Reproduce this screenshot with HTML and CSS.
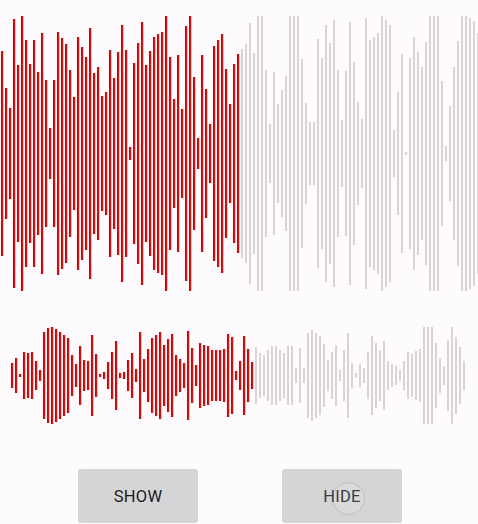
FILE: index.html
```html
<!DOCTYPE html>
<html lang="en">
<head>
<meta charset="utf-8">
<title>Waveform</title>
<link rel="stylesheet" href="styles.css">
</head>
<body>
<main class="screen">
<div class="wave wave-large" id="large"></div>
<div class="wave wave-small" id="small"></div>
<div class="actions">
<button class="button" type="button">SHOW</button>
<button class="button pressed" type="button"><span class="touch"></span><span class="label">HIDE</span></button>
</div>
</main>
<script src="wave.js"></script>
</body>
</html>
```
FILE: styles.css
```css
* { box-sizing: border-box; }
body { margin: 0; background: #fdfbfe; }
.screen { width: 478px; height: 524px; overflow: hidden; padding-top: 16px; font-family: Roboto, sans-serif; }
.wave { display: flex; align-items: center; gap: 2px; overflow: hidden; }
.wave-large { height: 275px; padding-left: 1px; }
.wave-small { height: 97px; margin-top: 36px; padding-left: 11px; }
.bar { flex: 0 0 2px; background: #dad3d6; }
.bar.played { background: linear-gradient(to right, #702c2c 1px, #fb0000 1px); box-shadow: 1px 0 0 #ffb4b4; }
.actions { display: flex; gap: 84px; margin-top: 45px; padding-left: 78px; }
.button { position: relative; width: 120px; height: 54px; padding: 1px 0 0; border: 0; border-radius: 3px; background: #d5d5d7; color: #1b1c1e; font: 400 16.5px/53px Roboto, sans-serif; letter-spacing: 0.25px; }
.pressed { color: #3b3e40; }
.label { position: relative; }
.touch { position: absolute; left: 50px; top: 13px; width: 33px; height: 33px; border: 1px solid #bfbdbf; border-radius: 50%; background: #dcd9db; }
```
FILE: wave.js
```js
const large = [
  51,88,108,19,65,16,40,64,40,72,33,80,128,80,32,38,44,70,97,37,47,57,28,73,67,96,92,50,78,52,
  25,50,147,63,43,22,65,51,37,34,32,16,57,99,55,109,26,16,77,138,55,89,124,46,40,34,69,104,64,54,
  49,44,23,53,16,16,70,124,72,104,90,76,16,16,16,59,103,122,122,39,58,25,43,20,70,120,71,22,62,102,
  119,18,40,37,33,16,20,25,130,92,54,152,58,37,52,67,42,16,16,16,81,146,106,67,41,16,16,18,21,33
];
const small = [
  48,43,59,37,38,37,46,55,17,13,12,14,17,20,23,40,49,31,45,46,20,39,59,57,47,37,26,58,57,45,38,54,17,44,34,23,20,
  17,30,24,19,40,44,48,16,33,50,28,30,31,35,35,35,34,19,22,56,46,21,34,47,
  32,38,40,35,31,31,35,38,31,31,53,33,53,18,15,18,
  21,29,45,37,30,55,35,18,48,58,49,53,37,21,28,35,26,46,49,51,55,46,37,39,36,34,12,12,12,28,43,51,25,12,22,32,46
];

// Each value is a bar's inset from the top; bars mirror around the centre line.
function draw(id, insets, span, played) {
  const wave = document.getElementById(id);
  insets.forEach((inset, i) => {
    const bar = document.createElement('span');
    bar.className = i < played ? 'bar played' : 'bar';
    bar.style.height = span - 2 * inset + 'px';
    wave.append(bar);
  });
}

draw('large', large, 307, 60);
draw('small', small, 121, 61);
```
